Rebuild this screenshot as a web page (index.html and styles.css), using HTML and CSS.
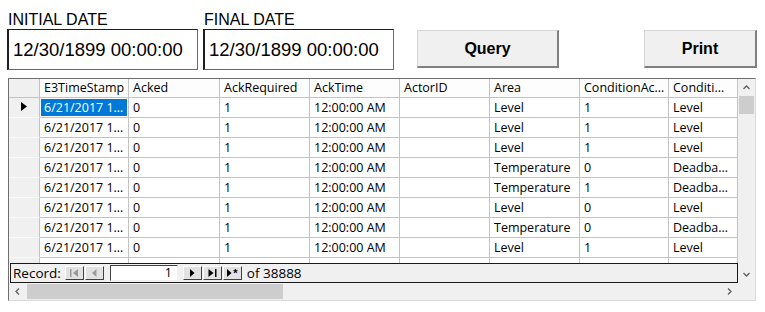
FILE: index.html
```html
<!DOCTYPE html>
<html lang="en">
<head>
  <meta charset="UTF-8" />
  <title>Alarm History</title>
  <link rel="stylesheet" href="styles.css">
</head>
<body>

<!-- Filtro de datas + botoes -->
<div class="top">
  <div class="field">
    <div class="label">INITIAL DATE</div>
    <div class="datebox">12/30/1899 00:00:00</div>
  </div>
  <div class="field field2">
    <div class="label">FINAL DATE</div>
    <div class="datebox">12/30/1899 00:00:00</div>
  </div>
  <button class="btn btn-query">Query</button>
  <button class="btn btn-print">Print</button>
</div>

<!-- Grade de dados -->
<div class="grid">
  <div class="grid-body">
    <div class="grid-main">
      <div class="sheet">
        <div class="row head">
          <div class="sel"></div>
          <div class="cell">E3TimeStamp</div>
          <div class="cell">Acked</div>
          <div class="cell">AckRequired</div>
          <div class="cell">AckTime</div>
          <div class="cell">ActorID</div>
          <div class="cell">Area</div>
          <div class="cell">ConditionAc…</div>
          <div class="cell">Conditi…</div>
        </div>
        <div class="row">
          <div class="sel current"><svg width="6" height="9" viewBox="0 0 6 9"><path d="M0 0 L6 4.5 L0 9Z" fill="#000"/></svg></div>
          <div class="cell selected">6/21/2017 1…</div>
          <div class="cell">0</div><div class="cell">1</div><div class="cell">12:00:00 AM</div><div class="cell"></div>
          <div class="cell">Level</div><div class="cell">1</div><div class="cell">Level</div>
        </div>
        <div class="row">
          <div class="sel"></div><div class="cell">6/21/2017 1…</div>
          <div class="cell">0</div><div class="cell">1</div><div class="cell">12:00:00 AM</div><div class="cell"></div>
          <div class="cell">Level</div><div class="cell">1</div><div class="cell">Level</div>
        </div>
        <div class="row">
          <div class="sel"></div><div class="cell">6/21/2017 1…</div>
          <div class="cell">0</div><div class="cell">1</div><div class="cell">12:00:00 AM</div><div class="cell"></div>
          <div class="cell">Level</div><div class="cell">1</div><div class="cell">Level</div>
        </div>
        <div class="row">
          <div class="sel"></div><div class="cell">6/21/2017 1…</div>
          <div class="cell">0</div><div class="cell">1</div><div class="cell">12:00:00 AM</div><div class="cell"></div>
          <div class="cell">Temperature</div><div class="cell">0</div><div class="cell">Deadba…</div>
        </div>
        <div class="row">
          <div class="sel"></div><div class="cell">6/21/2017 1…</div>
          <div class="cell">0</div><div class="cell">1</div><div class="cell">12:00:00 AM</div><div class="cell"></div>
          <div class="cell">Temperature</div><div class="cell">1</div><div class="cell">Deadba…</div>
        </div>
        <div class="row">
          <div class="sel"></div><div class="cell">6/21/2017 1…</div>
          <div class="cell">0</div><div class="cell">1</div><div class="cell">12:00:00 AM</div><div class="cell"></div>
          <div class="cell">Level</div><div class="cell">0</div><div class="cell">Level</div>
        </div>
        <div class="row">
          <div class="sel"></div><div class="cell">6/21/2017 1…</div>
          <div class="cell">0</div><div class="cell">1</div><div class="cell">12:00:00 AM</div><div class="cell"></div>
          <div class="cell">Temperature</div><div class="cell">0</div><div class="cell">Deadba…</div>
        </div>
        <div class="row">
          <div class="sel"></div><div class="cell">6/21/2017 1…</div>
          <div class="cell">0</div><div class="cell">1</div><div class="cell">12:00:00 AM</div><div class="cell"></div>
          <div class="cell">Level</div><div class="cell">1</div><div class="cell">Level</div>
        </div>
        <div class="row">
          <div class="sel"></div><div class="cell"></div>
          <div class="cell"></div><div class="cell"></div><div class="cell"></div><div class="cell"></div>
          <div class="cell"></div><div class="cell"></div><div class="cell"></div>
        </div>
      </div>

      <div class="recordbar">
        <span class="rec-label">Record:</span>
        <span class="nav off"><svg width="9" height="8" viewBox="0 0 9 8"><rect x="0" y="0" width="1.5" height="8"/><path d="M8 0 L3 4 L8 8Z"/></svg></span>
        <span class="nav off"><svg width="5" height="8" viewBox="0 0 5 8"><path d="M4.5 0 L0 4 L4.5 8Z"/></svg></span>
        <span class="recbox">1</span>
        <span class="nav"><svg width="5" height="8" viewBox="0 0 5 8"><path d="M0 0 L4.5 4 L0 8Z"/></svg></span>
        <span class="nav"><svg width="9" height="8" viewBox="0 0 9 8"><path d="M0.5 0 L5.5 4 L0.5 8Z"/><rect x="7" y="0" width="1.5" height="8"/></svg></span>
        <span class="nav nav-new"><svg width="5" height="8" viewBox="0 0 5 8"><path d="M0 0 L4.5 4 L0 8Z"/></svg><b>*</b></span>
        <span class="rec-total">of 38888</span>
      </div>
    </div>

    <div class="vscroll">
      <svg class="arrow" width="7" height="5" viewBox="0 0 7 5"><path d="M0.5 4 L3.5 1 L6.5 4" fill="none" stroke="#606060" stroke-width="1.3"/></svg>
      <div class="vthumb"></div>
      <div class="vspace"></div>
      <svg class="arrow" width="7" height="5" viewBox="0 0 7 5"><path d="M0.5 1 L3.5 4 L6.5 1" fill="none" stroke="#606060" stroke-width="1.3"/></svg>
    </div>
  </div>

  <div class="grid-foot">
    <div class="hscroll">
      <svg class="arrow" width="5" height="7" viewBox="0 0 5 7"><path d="M4 0.5 L1 3.5 L4 6.5" fill="none" stroke="#606060" stroke-width="1.3"/></svg>
      <div class="hthumb"></div>
      <div class="hspace"></div>
      <svg class="arrow" width="5" height="7" viewBox="0 0 5 7"><path d="M1 0.5 L4 3.5 L1 6.5" fill="none" stroke="#606060" stroke-width="1.3"/></svg>
    </div>
    <div class="corner"></div>
  </div>
</div>

</body>
</html>
```

FILE: styles.css
```css
body {
  margin: 0;
  background: #fff;
  color: #000;
  font-family: 'Open Sans', sans-serif;
}

/* topo */
.top {
  display: flex;
  align-items: flex-start;
  padding-left: 7px;
  height: 70px;
}
.field {
  width: 191px;
}
.field2 {
  margin-left: 5px;
}
.label {
  font-family: 'Liberation Sans', sans-serif;
  font-size: 16px;
  line-height: 19px;
  padding: 10px 0 0 1px;
  height: 19px;
}
.datebox {
  box-sizing: border-box;
  height: 41px;
  border: 1px solid #6a6a6a;
  border-top-color: #1e1e1e;
  border-left: 2px solid #1e1e1e;
  padding-left: 4px;
  font-family: 'Liberation Sans', sans-serif;
  font-size: 18.5px;
  line-height: 40px;
  white-space: nowrap;
}
.btn {
  box-sizing: border-box;
  margin-top: 30px;
  height: 38px;
  background: #f0f0f0;
  border: 1px solid #d4d4d4;
  border-right: 2px solid #808080;
  border-bottom: 2px solid #808080;
  font-family: 'Liberation Sans', sans-serif;
  font-weight: bold;
  font-size: 16px;
  padding: 0;
  color: #000;
}
.btn-query {
  margin-left: 23px;
  width: 142px;
}
.btn-print {
  margin-left: 85px;
  width: 113px;
}

/* grade */
.grid {
  box-sizing: border-box;
  margin: 8px 0 0 8px;
  width: 748px;
  height: 223px;
  border: 1px solid #dadada;
  border-top-color: #6e6e6e;
  border-left-color: #6e6e6e;
  font-size: 12.5px;
}
.grid-body {
  display: flex;
}
.grid-main {
  width: 729px;
}
.sheet {
  height: 184px;
  overflow: hidden;
}
.row {
  display: grid;
  grid-template-columns: 31px 89px 91px 90px 90px 90px 90px 89px 69px;
  height: 20px;
}
.row.head {
  height: 19px;
}
.cell {
  box-sizing: border-box;
  border-right: 1px solid #c3c3c3;
  border-bottom: 1px solid #c3c3c3;
  padding: 1px 0 0 4px;
  line-height: 18px;
  white-space: nowrap;
  overflow: hidden;
}
.head .cell {
  background: #fdfdfd;
  padding-top: 0;
}
.cell.selected {
  background: #0078d7;
  color: #fff;
  box-shadow: inset 0 0 0 1px #fff;
}
.sel {
  box-sizing: border-box;
  background: #f0f0f0;
  border-right: 1px solid #c3c3c3;
  border-bottom: 1px solid #fafafa;
}
.head .sel {
  border-bottom-color: #c3c3c3;
}
.sel.current svg {
  display: block;
  margin: 4px 0 0 12px;
}

/* barra de registros */
.recordbar {
  box-sizing: border-box;
  margin-left: 1px;
  width: 728px;
  height: 20px;
  border: 1px solid #1a1a1a;
  background: #f0f0f0;
  display: flex;
  align-items: center;
  white-space: nowrap;
  font-size: 13.5px;
}
.rec-label {
  padding-left: 2px;
  margin-right: 4px;
}
.nav {
  box-sizing: border-box;
  width: 19px;
  height: 14px;
  margin-right: 1px;
  background: #e2e2e2;
  border: 1px solid;
  border-color: #ffffff #404040 #404040 #ffffff;
  display: flex;
  align-items: center;
  justify-content: center;
  fill: #000;
}
.nav.off {
  fill: #9a9a9a;
}
.nav-new b {
  font-size: 11px;
  line-height: 10px;
  margin-left: 1px;
  font-family: 'Liberation Sans', sans-serif;
}
.recbox {
  box-sizing: border-box;
  margin: 0 5px 0 5px;
  width: 68px;
  height: 16px;
  background: #fff;
  border: 1px solid;
  border-color: #404040 #f0f0f0 #f0f0f0 #404040;
  text-align: right;
  padding-right: 5px;
  line-height: 14px;
  font-size: 12.5px;
}
.rec-total {
  margin-left: 4px;
}

/* barras de rolagem */
.vscroll {
  width: 17px;
  height: 204px;
  background: #f0f0f0;
  display: flex;
  flex-direction: column;
  align-items: center;
}
.vscroll .arrow {
  margin: 6px 0;
}
.vthumb {
  width: 15px;
  height: 18px;
  background: #cdcdcd;
}
.vspace {
  flex: 1;
}
.grid-foot {
  display: flex;
  height: 17px;
}
.hscroll {
  width: 729px;
  background: #f0f0f0;
  display: flex;
  align-items: center;
}
.hscroll .arrow {
  margin: 0 6px;
}
.hthumb {
  width: 256px;
  height: 15px;
  background: #cdcdcd;
  margin-left: 1px;
}
.hspace {
  flex: 1;
}
.corner {
  width: 17px;
  background: #f0f0f0;
}
```
